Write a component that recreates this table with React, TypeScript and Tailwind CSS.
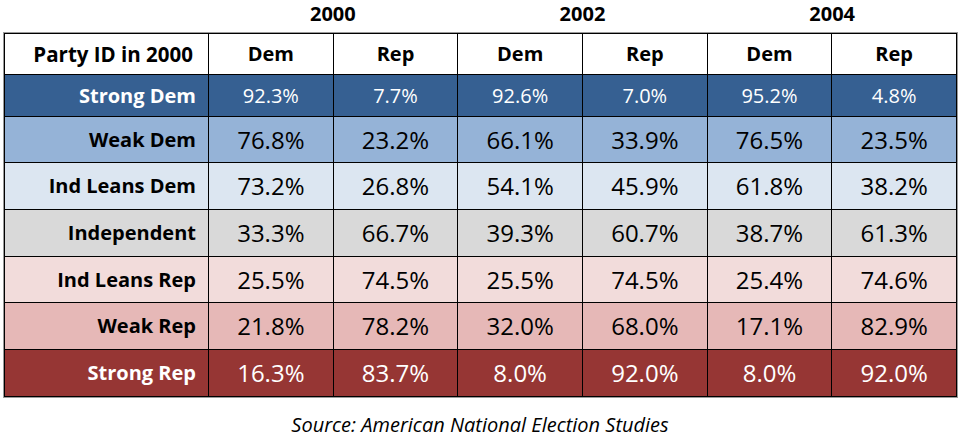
import React from "react";

type Row = {
  label: string;
  bg: string;
  light: boolean;
  small: boolean;
  values: string[];
};

const rows: Row[] = [
  { label: "Strong Dem", bg: "bg-[#366092]", light: true, small: true, values: ["92.3%", "7.7%", "92.6%", "7.0%", "95.2%", "4.8%"] },
  { label: "Weak Dem", bg: "bg-[#95b3d7]", light: false, small: false, values: ["76.8%", "23.2%", "66.1%", "33.9%", "76.5%", "23.5%"] },
  { label: "Ind Leans Dem", bg: "bg-[#dce6f1]", light: false, small: false, values: ["73.2%", "26.8%", "54.1%", "45.9%", "61.8%", "38.2%"] },
  { label: "Independent", bg: "bg-[#d9d9d9]", light: false, small: false, values: ["33.3%", "66.7%", "39.3%", "60.7%", "38.7%", "61.3%"] },
  { label: "Ind Leans Rep", bg: "bg-[#f2dcdb]", light: false, small: false, values: ["25.5%", "74.5%", "25.5%", "74.5%", "25.4%", "74.6%"] },
  { label: "Weak Rep", bg: "bg-[#e6b8b7]", light: false, small: false, values: ["21.8%", "78.2%", "32.0%", "68.0%", "17.1%", "82.9%"] },
  { label: "Strong Rep", bg: "bg-[#963634]", light: true, small: false, values: ["16.3%", "83.7%", "8.0%", "92.0%", "8.0%", "92.0%"] },
];

export default function App() {
  return (
    <div className="w-[960px] h-[440px] bg-white font-['Open_Sans',sans-serif] text-black overflow-hidden">
      {/* Year headers */}
      <div className="ml-[4px] w-[953px] h-[33px] grid grid-cols-[204px_repeat(3,minmax(0,1fr))] items-start">
        <div />
        <div className="text-center text-[20px] font-bold leading-[27px]">2000</div>
        <div className="text-center text-[20px] font-bold leading-[27px]">2002</div>
        <div className="text-center text-[20px] font-bold leading-[27px]">2004</div>
      </div>

      {/* Table */}
      <div className="ml-[4px] w-[953px] border border-black shadow-[0_0_0_1px_#9a9a9a] bg-black grid grid-cols-[203px_repeat(6,minmax(0,1fr))] grid-rows-[40px_41px_45px_46px_46px_45px_46px_46px] gap-px">
        <div className="bg-white flex items-center justify-end pr-[15px] text-[20.5px] font-bold">Party ID in 2000</div>
        {["Dem", "Rep", "Dem", "Rep", "Dem", "Rep"].map((h, i) => (
          <div key={i} className="bg-white flex items-center justify-center text-[20px] font-bold">
            {h}
          </div>
        ))}
        {rows.map((r) => (
          <React.Fragment key={r.label}>
            <div
              className={`${r.bg} ${r.light ? "text-white" : "text-black"} flex items-center justify-end pr-[12px] text-[20px] font-bold`}
            >
              {r.label}
            </div>
            {r.values.map((v, i) => (
              <div
                key={i}
                className={`${r.bg} ${r.light ? "text-white" : "text-black"} ${r.small ? "text-[20px]" : "text-[24px]"} flex items-center justify-center`}
              >
                {v}
              </div>
            ))}
          </React.Fragment>
        ))}
      </div>

      {/* Source */}
      <div className="mt-[14px] text-center italic text-[20px] leading-[28px] text-black">
        Source: American National Election Studies
      </div>
    </div>
  );
}
